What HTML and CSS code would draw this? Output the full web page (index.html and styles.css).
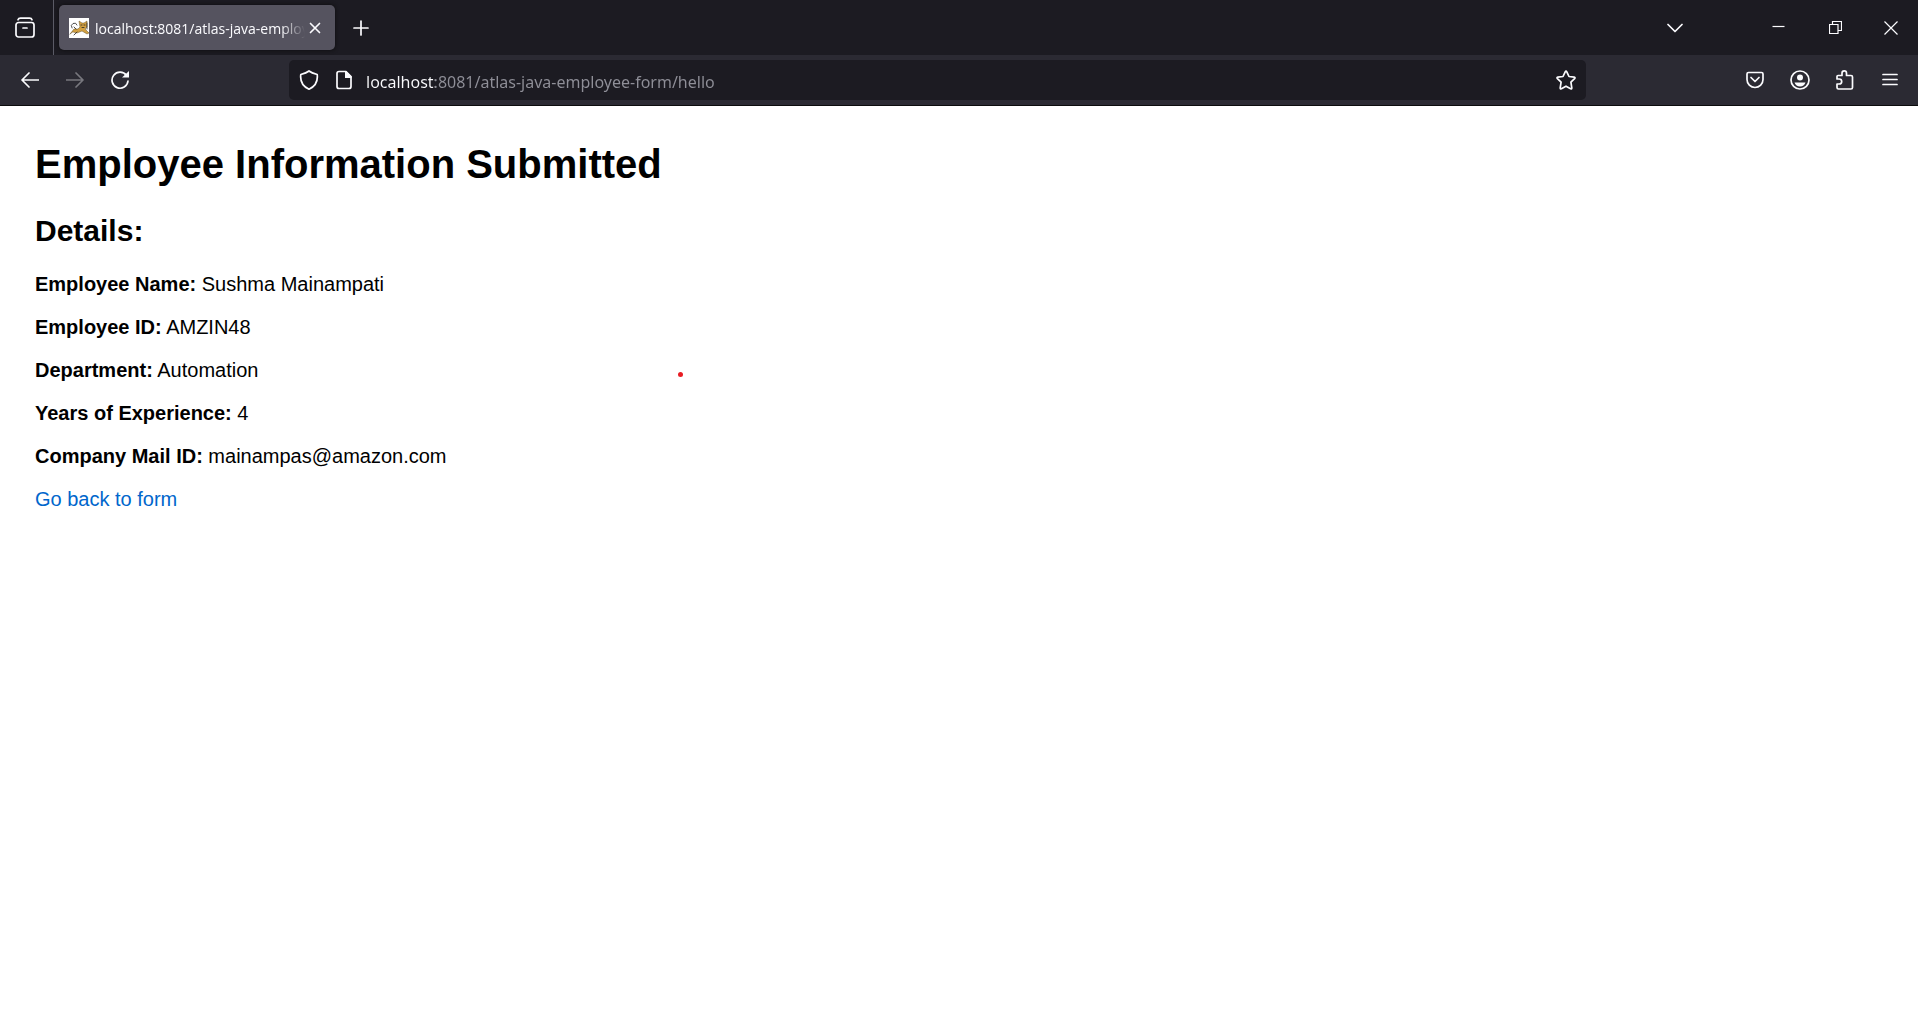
FILE: index.html
```html
<!DOCTYPE html>
<html lang="en">
<head>
<meta charset="utf-8">
<title>localhost:8081/atlas-java-employee-form/hello</title>
<link rel="stylesheet" href="styles.css">
</head>
<body>
<header class="browser">
  <div class="tabstrip">
    <button class="icon-btn recent" aria-label="Recent browsing">
      <svg width="22" height="22" viewBox="0 0 22 22"><path d="M4 2.800Q4.500 1.200 6.500 1.200H15.500Q17.500 1.200 18 2.800"/><rect x="2" y="5.500" width="18" height="14.500" rx="2.500"/><path d="M9 11h4"/></svg>
    </button>
    <div class="tab">
      <svg class="favicon" width="20" height="20" viewBox="0 0 20 20"><rect class="paper" width="20" height="20"/><path class="cat" d="M1 16L5 11 9 11 11 9 10 3 13 5 15 5 18 3 18 9 16 11 20 15 18 16 13 13 8 15 4 14Z"/><path class="ink" d="M3 10Q1 7 4 5.500Q7 4 8 7M7 11L5 9M8 14L5 17M12 7h1M15 7h1M13 9.500h2M18 11V5"/></svg>
      <span class="tab-title">localhost:8081/atlas-java-employee-form/hello</span>
      <button class="tab-close" aria-label="Close tab">
        <svg width="12" height="12" viewBox="0 0 12 12"><path d="M1.500 1.500l9 9M10.500 1.500l-9 9"/></svg>
      </button>
    </div>
    <button class="icon-btn new-tab" aria-label="New tab">
      <svg width="16" height="16" viewBox="0 0 16 16"><path d="M8 1v14M1 8h14"/></svg>
    </button>
    <div class="window-controls">
      <button class="icon-btn list-tabs" aria-label="List all tabs">
        <svg width="16" height="10" viewBox="0 0 16 10"><path d="M1 1.500l7 7 7-7"/></svg>
      </button>
      <button class="win-btn" aria-label="Minimize">
        <svg width="13" height="13" viewBox="0 0 13 13"><path class="hair" d="M.5 5.500h12"/></svg>
      </button>
      <button class="win-btn" aria-label="Restore">
        <svg width="13" height="13" viewBox="0 0 13 13"><path class="hair" d="M.5 3.500h8.500v9H.5zM3.500 3.500V.5h9v9H9"/></svg>
      </button>
      <button class="win-btn" aria-label="Close">
        <svg width="14" height="14" viewBox="0 0 14 14"><path class="hair" d="M.5 .5l13 13M13.500 .5l-13 13"/></svg>
      </button>
    </div>
  </div>
  <div class="toolbar">
    <button class="icon-btn" aria-label="Back">
      <svg width="18" height="16" viewBox="0 0 18 16"><path d="M17.500 8H1.500M8 1L1 8l7 7"/></svg>
    </button>
    <button class="icon-btn" aria-label="Forward" disabled>
      <svg width="18" height="16" viewBox="0 0 18 16"><path d="M.5 8h16M10 1l7 7-7 7"/></svg>
    </button>
    <button class="icon-btn" aria-label="Reload">
      <svg width="20" height="20" viewBox="0 0 20 20"><path d="M16.500 5.500A8 8 0 1 0 18 11"/><path class="solid" d="M19 1v6.500h-7z"/></svg>
    </button>
    <div class="address">
      <svg width="20" height="20" viewBox="0 0 20 20"><path d="M10 1C7.500 3 4.500 3.800 1.800 4.500C1 11 4 16.500 10 19.200C16 16.500 19 11 18.200 4.500C15.500 3.800 12.500 3 10 1Z"/></svg>
      <svg width="20" height="20" viewBox="0 0 20 20"><path d="M12 1.500H5Q3 1.500 3 3.500V16.500Q3 18.500 5 18.500H15Q17 18.500 17 16.500V6.500Z"/><path class="solid" d="M11 1v7h6.500V6.500L12 1z"/></svg>
      <input class="url" type="text" aria-label="Address" value="localhost:8081/atlas-java-employee-form/hello">
      <button class="bookmark" aria-label="Bookmark this page">
        <svg width="20" height="20" viewBox="0 0 20 20"><path d="M9.200 1.800Q10 .4 10.800 1.800L13 6.500 18.200 7.200Q19.600 7.500 18.600 8.600L14.900 12.200 15.800 17.800Q15.900 19.200 14.600 18.800L10 16.200 5.400 18.800Q4.100 19.200 4.200 17.800L5.100 12.200 1.400 8.600Q.4 7.500 1.800 7.200L7 6.500Z"/></svg>
      </button>
    </div>
    <button class="icon-btn" aria-label="Save to Pocket">
      <svg width="20" height="20" viewBox="0 0 20 20"><path d="M3.500 2.500H16.500Q18 2.500 18 4V9.500A8 8 0 0 1 2 9.500V4Q2 2.500 3.500 2.500Z"/><path d="M6 7.500l4 4 4-4"/></svg>
    </button>
    <button class="icon-btn" aria-label="Account">
      <svg width="20" height="20" viewBox="0 0 20 20"><circle cx="10" cy="10" r="9"/><circle class="solid" cx="10" cy="7.500" r="3"/><path class="solid" d="M4.500 12.500h11Q14 16.500 10 16.500T4.500 12.500z"/></svg>
    </button>
    <button class="icon-btn" aria-label="Extensions">
      <svg width="20" height="20" viewBox="0 0 20 20"><path d="M2 9V6.500Q2 5.500 3 5.500H7V3.200A2.200 2.200 0 0 1 11.500 3.200V5.500H16Q17.500 5.500 17.500 7V17.500Q17.500 19 16 19H3.500Q2 19 2 17.500V14H4.200A2.500 2.500 0 0 0 4.200 9Z"/></svg>
    </button>
    <button class="icon-btn" aria-label="Open application menu">
      <svg width="16" height="20" viewBox="0 0 16 20"><path d="M1 4.500h14M1 9.500h14M1 14.500h14"/></svg>
    </button>
  </div>
</header>
<main class="page">
  <h1>Employee Information Submitted</h1>
  <h2>Details:</h2>
  <p><strong>Employee Name:</strong> Sushma Mainampati</p>
  <p><strong>Employee ID:</strong> AMZIN48</p>
  <p><strong>Department:</strong> Automation</p>
  <p><strong>Years of Experience:</strong> 4</p>
  <p><strong>Company Mail ID:</strong> mainampas@amazon.com</p>
  <a href="#">Go back to form</a>
</main>
<span class="pointer-dot"></span>
</body>
</html>
```
FILE: styles.css
```css
* { box-sizing: border-box; }
body {
  margin: 0;
  background: #fff;
  color: #000;
  font-family: "Liberation Sans", Arial, sans-serif;
  font-size: 20px;
  line-height: 23px;
}
button {
  display: flex;
  align-items: center;
  justify-content: center;
  flex: none;
  padding: 0;
  border: 0;
  background: none;
  color: inherit;
}
button:disabled { color: #78777e; }
svg {
  display: block;
  flex: none;
  fill: none;
  stroke: currentColor;
  stroke-width: 1.7;
  stroke-linecap: round;
  stroke-linejoin: round;
}
.solid { fill: currentColor; stroke: none; }
.hair { stroke-width: 1.2; stroke-linecap: butt; stroke-linejoin: miter; }
.browser {
  color: #fbfbfe;
  font-family: "Segoe UI", "Open Sans", sans-serif;
  border-bottom: 1px solid #0c0c0d;
}
.tabstrip {
  display: flex;
  align-items: center;
  height: 55px;
  background: #1c1b22;
}
.icon-btn { width: 45px; height: 40px; }
.recent {
  width: 54px;
  height: 55px;
  padding-right: 4px;
  border-right: 1px solid #5b5b66;
}
.tab {
  display: flex;
  align-items: center;
  width: 276px;
  height: 45px;
  margin-left: 5px;
  padding: 0 10px;
  border-radius: 5px;
  background: #55535f;
  box-shadow: 0 0 4px #0c0c0d;
}
.favicon { stroke-width: 1; }
.paper { fill: #fff; stroke: none; }
.cat { fill: #d2a041; stroke: #69552c; stroke-width: .5; }
.ink { stroke: #252525; stroke-width: .8; }
.tab-title {
  flex: 1;
  min-width: 0;
  margin-left: 6px;
  padding-top: 2px;
  overflow: hidden;
  white-space: nowrap;
  font-size: 14px;
  mask-image: linear-gradient(to left, transparent, #000 24px);
}
.tab-close { width: 20px; height: 20px; }
.new-tab { margin-left: 3px; }
.window-controls { display: flex; align-items: center; margin-left: auto; }
.list-tabs { margin-right: 53px; }
.win-btn { width: 57px; height: 55px; }
.win-btn:last-child { width: 54px; }
.toolbar {
  display: flex;
  align-items: center;
  height: 50px;
  padding: 0 6px 0 7px;
  background: #2b2a33;
}
.address {
  display: flex;
  align-items: center;
  flex: 1;
  gap: 15px;
  height: 40px;
  margin: 0 146px 0 147px;
  padding: 0 10px;
  border-radius: 5px;
  background: #1c1b22;
}
.url {
  flex: 1;
  min-width: 0;
  padding: 3px 0 0;
  margin-left: -3px;
  border: 0;
  font: 16px "Segoe UI", "Noto Sans", sans-serif;
  background: linear-gradient(90deg, #fbfbfe 69px, #8f8f98 69px);
  background-clip: text;
  color: transparent;
}
.bookmark { width: 20px; height: 20px; }
.page { padding: 35px; }
h1, h2, p { margin: 0; }
h1 { margin-bottom: 27px; font-size: 40px; line-height: 46px; }
h2 { margin-bottom: 25px; font-size: 30px; line-height: 34px; }
p { margin-bottom: 20px; }
a { color: #0066cc; text-decoration: none; }
.pointer-dot {
  position: absolute;
  left: 678px;
  top: 372px;
  width: 5px;
  height: 5px;
  border-radius: 50%;
  background: #e81c23;
}
```
